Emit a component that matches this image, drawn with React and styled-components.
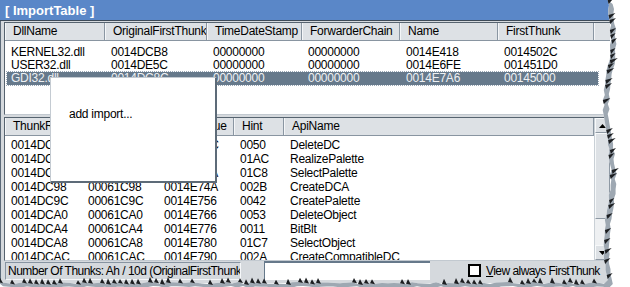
import styled, { createGlobalStyle } from "styled-components";

const GlobalStyle = createGlobalStyle`
	html, body {
		margin: 0;
		padding: 0;
		background: #ffffff;
	}
	body {
		font-family: "Liberation Sans", Arial, sans-serif;
		font-size: 12px;
		color: #000;
	}
`;

const Page = styled.div`
	position: relative;
	width: 630px;
	height: 287px;
	overflow: hidden;
	background: #ffffff;
`;

const Window = styled.div`
	display: flex;
	flex-direction: column;
	width: 610px;
	height: 283px;
	background: #d5d9dd;
`;

const TitleBar = styled.div`
	height: 20px;
	flex: none;
	display: flex;
	align-items: center;
	padding-left: 5px;
	background: #5a87c8;
	border-bottom: 1px solid #3d4a58;
	color: #ffffff;
	font-weight: bold;
	font-size: 13px;
`;

const Body = styled.div`
	flex: 1;
	display: flex;
	flex-direction: column;
	padding: 1px 0 0 3px;
	border-left: 1px solid #5b6a79;
`;

const ListBox = styled.div`
	position: relative;
	display: flex;
	height: ${(p) => p.$height}px;
	flex: none;
	background: #ffffff;
	border-top: 1px solid #56636f;
	border-left: 1px solid #56636f;
	border-bottom: 1px solid #c2c9d0;
	overflow: hidden;
`;

const ListMain = styled.div`
	flex: 1;
	display: flex;
	flex-direction: column;
	min-width: 0;
`;

const HeaderRow = styled.div`
	display: flex;
	height: 17px;
	flex: none;
	background: #dde1e5;
	border-bottom: 1px solid #8995a1;
`;

const HeaderCell = styled.div`
	width: ${(p) => p.$w}px;
	flex: none;
	padding-left: 7px;
	box-sizing: border-box;
	line-height: 17px;
	letter-spacing: -0.25px;
	border-right: 1px solid #8a96a2;
	border-left: 1px solid #f4f6f8;
	white-space: nowrap;
	overflow: hidden;
`;

const HeaderFill = styled.div`
	flex: 1;
	border-left: 1px solid #f4f6f8;
`;

const Rows = styled.div`
	padding-top: ${(p) => p.$pad}px;
	padding-left: 2px;
`;

const Row = styled.div`
	display: flex;
	height: ${(p) => p.$h}px;
	width: 591px;
	line-height: ${(p) => p.$h}px;
	background: ${(p) => (p.$selected ? "#66798b" : "transparent")};
	color: ${(p) => (p.$selected ? "#eef1f4" : "#000")};
	outline: ${(p) => (p.$selected ? "1px dotted #9aa8b6" : "none")};
`;

const Cell = styled.div`
	width: ${(p) => p.$w}px;
	flex: none;
	padding-left: 4px;
	box-sizing: border-box;
	white-space: nowrap;
	letter-spacing: -0.25px;
`;

const ScrollBar = styled.div`
	width: 15px;
	flex: none;
	display: flex;
	flex-direction: column;
	background: #e4e7ea;
	border-left: 1px solid #c9d0d6;
`;

const ScrollButton = styled.div`
	height: 15px;
	flex: none;
	display: flex;
	align-items: center;
	justify-content: center;
	background: #dde1e5;
	border: 1px solid #8e99a4;
	border-top-color: #f7f9fa;
	border-left-color: #f7f9fa;
	box-sizing: border-box;
`;

const Thumb = styled.div`
	height: 86px;
	flex: none;
	background: #dde1e5;
	border: 1px solid #8e99a4;
	border-top-color: #f7f9fa;
	border-left-color: #f7f9fa;
	box-sizing: border-box;
`;

const Track = styled.div`
	flex: 1;
	background-color: #eef0f2;
	background-image: radial-gradient(#c3cad1 0.6px, transparent 0.7px);
	background-size: 2px 2px;
`;

const Gap = styled.div`
	height: 2px;
	flex: none;
`;

const StatusBar = styled.div`
	flex: 1;
	display: flex;
	align-items: center;
	padding: 0 0 3px 1px;
`;

const StatusText = styled.div`
	width: 236px;
	height: 18px;
	flex: none;
	line-height: 17px;
	padding-left: 2px;
	box-sizing: border-box;
	border: 1px solid #8794a1;
	border-right-color: #f5f7f9;
	border-bottom-color: #f5f7f9;
	white-space: nowrap;
	overflow: hidden;
	letter-spacing: -0.52px;
`;

const TextInput = styled.div`
	width: 166px;
	height: 19px;
	flex: none;
	margin-left: 23px;
	background: #ffffff;
	border-top: 2px solid #66798b;
	border-left: 1px solid #66798b;
	box-sizing: border-box;
`;

const CheckLabel = styled.label`
	display: flex;
	align-items: center;
	flex: none;
	gap: 5px;
	margin-left: 38px;
	white-space: nowrap;
	letter-spacing: -0.55px;

	u {
		text-decoration: underline;
	}
`;

const CheckBox = styled.span`
	width: 13px;
	height: 13px;
	background: #ffffff;
	border: 2px solid #000000;
	box-sizing: border-box;
`;

const Popup = styled.div`
	position: absolute;
	left: 50px;
	top: 77px;
	width: 167px;
	height: 106px;
	box-sizing: border-box;
	background: #ffffff;
	border-left: 1px solid #c4cbd2;
	border-top: 1px solid #c4cbd2;
	border-right: 2px solid #5d6b78;
	border-bottom: 2px solid #5d6b78;
	padding: 29px 0 0 18px;
	letter-spacing: -0.25px;
`;

const TornEdge = styled.svg`
	position: absolute;
	left: 0;
	top: 0;
	pointer-events: none;
`;

const topCols = [100, 102, 95, 98, 98, 96];
const topHeaders = ["DllName", "OriginalFirstThunk", "TimeDateStamp", "ForwarderChain", "Name", "FirstThunk"];
const topRows = [
	["KERNEL32.dll", "0014DCB8", "00000000", "00000000", "0014E418", "0014502C"],
	["USER32.dll", "0014DE5C", "00000000", "00000000", "0014E6FE", "001451D0"],
	["GDI32.dll", "0014DC8C", "00000000", "00000000", "0014E7A6", "00145000"],
];

const botCols = [77, 76, 76, 50, 310];
const botHeaders = ["ThunkRVA", "ThunkOffset", "ThunkValue", "Hint", "ApiName"];
const botRows = [
	["0014DC8C", "00061C8C", "0014E71C", "0050", "DeleteDC"],
	["0014DC90", "00061C90", "0014E728", "01AC", "RealizePalette"],
	["0014DC94", "00061C94", "0014E73A", "01C8", "SelectPalette"],
	["0014DC98", "00061C98", "0014E74A", "002B", "CreateDCA"],
	["0014DC9C", "00061C9C", "0014E756", "0042", "CreatePalette"],
	["0014DCA0", "00061CA0", "0014E766", "0053", "DeleteObject"],
	["0014DCA4", "00061CA4", "0014E776", "0011", "BitBlt"],
	["0014DCA8", "00061CA8", "0014E780", "01C7", "SelectObject"],
	["0014DCAC", "00061CAC", "0014E790", "002A", "CreateCompatibleDC"],
];

// torn paper edge: deterministic jitter
function noise(count, seed) {
	const out = [];
	let s = seed;
	for (let i = 0; i < count; i++) {
		s = (s * 9301 + 49297) % 233280;
		out.push(s / 233280);
	}
	return out;
}

function tornPaths() {
	const rnd = noise(200, 11);
	const edge = [];
	let i = 0;
	for (let y = 0; y <= 280; y += 5, i++) {
		edge.push([606 + Math.sin(y / 22) * 3.5 + rnd[i] * 2.5, y]);
	}
	for (let x = 604; x >= -4; x -= 6, i++) {
		edge.push([x, 282 + rnd[i % 200] * 2]);
	}
	const pts = (arr, dx, dy) =>
		arr.map((p, k) => `${k ? "L" : "M"}${(p[0] + dx).toFixed(1)} ${(p[1] + dy).toFixed(1)}`).join(" ");
	const white = `${pts(edge, 0, 0)} L-4 290 L634 290 L634 -2 Z`;
	const band = `${pts(edge, 0, 0)} ${edge
		.slice()
		.reverse()
		.map((p) => `L${(p[0] + 5).toFixed(1)} ${(p[1] + 4).toFixed(1)}`)
		.join(" ")} Z`;
	const blobs = [];
	edge.forEach((p, k) => {
		const r = rnd[(k * 7) % 200];
		if (r > 0.45) {
			const onRight = p[1] < 280;
			const len = 3 + r * 5;
			if (onRight) {
				blobs.push(`M${p[0].toFixed(1)} ${p[1]} L${(p[0] + len).toFixed(1)} ${(p[1] - 2).toFixed(1)} L${(p[0] + 1).toFixed(1)} ${(p[1] + 4).toFixed(1)} Z`);
			} else {
				blobs.push(`M${p[0]} ${p[1].toFixed(1)} L${(p[0] + 2).toFixed(1)} ${(p[1] - len / 1.5).toFixed(1)} L${(p[0] + 5).toFixed(1)} ${(p[1] + 1).toFixed(1)} Z`);
			}
		}
	});
	return { white, band, blobs: blobs.join(" ") };
}

const torn = tornPaths();

const App = () => {
	return (
		<Page>
			<GlobalStyle />
			<Window>
				<TitleBar>[ ImportTable ]</TitleBar>
				<Body>
					<ListBox $height={91}>
						<ListMain>
							<HeaderRow>
								{topHeaders.map((h, i) => (
									<HeaderCell key={h} $w={topCols[i]}>
										{h}
									</HeaderCell>
								))}
								<HeaderFill />
							</HeaderRow>
							<Rows $pad={5}>
								{topRows.map((r, ri) => (
									<Row key={ri} $h={13} $selected={ri === 2}>
										{r.map((c, ci) => (
											<Cell key={ci} $w={topCols[ci]}>
												{c}
											</Cell>
										))}
									</Row>
								))}
							</Rows>
						</ListMain>
					</ListBox>
					<Gap />
					<ListBox $height={142}>
						<ListMain>
							<HeaderRow>
								{botHeaders.map((h, i) => (
									<HeaderCell key={h} $w={botCols[i]}>
										{h}
									</HeaderCell>
								))}
								<HeaderFill />
							</HeaderRow>
							<Rows $pad={2}>
								{botRows.map((r, ri) => (
									<Row key={ri} $h={14}>
										{r.map((c, ci) => (
											<Cell key={ci} $w={botCols[ci]}>
												{c}
											</Cell>
										))}
									</Row>
								))}
							</Rows>
						</ListMain>
						<ScrollBar>
							<ScrollButton>
								<svg width="7" height="4" viewBox="0 0 7 4">
									<path d="M3.5 0 L7 4 L0 4 Z" fill="#000" />
								</svg>
							</ScrollButton>
							<Thumb />
							<Track />
							<ScrollButton>
								<svg width="7" height="4" viewBox="0 0 7 4">
									<path d="M0 0 L7 0 L3.5 4 Z" fill="#000" />
								</svg>
							</ScrollButton>
						</ScrollBar>
					</ListBox>
					<StatusBar>
						<StatusText>Number Of Thunks: Ah / 10d (OriginalFirstThunk)</StatusText>
						<TextInput />
						<CheckLabel>
							<CheckBox />
							<span>
								<u>V</u>iew always FirstThunk
							</span>
						</CheckLabel>
					</StatusBar>
				</Body>
			</Window>
			<Popup>add import...</Popup>
			<TornEdge width="630" height="287" viewBox="0 0 630 287">
				<path d={torn.white} fill="#ffffff" />
				<path d={torn.band} fill="#9ea8b2" />
				<path d={torn.blobs} fill="#1c1e21" />
			</TornEdge>
		</Page>
	);
};

export default App;
